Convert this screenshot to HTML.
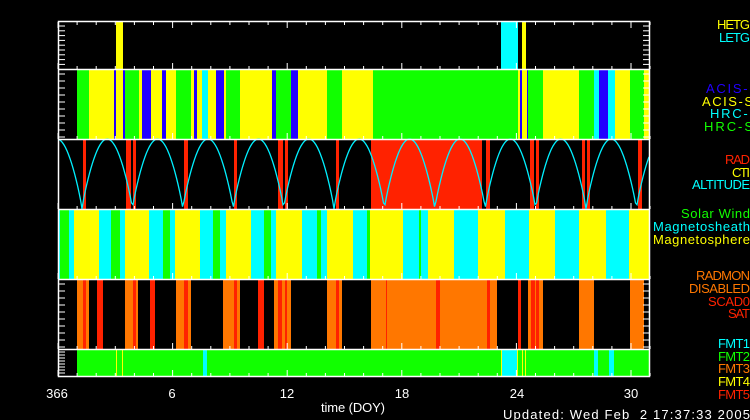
<!DOCTYPE html>
<html><head><meta charset="utf-8"><style>
html,body{margin:0;padding:0;background:#000;width:750px;height:420px;overflow:hidden}
svg{display:block}
text{font-family:"Liberation Sans",sans-serif;font-size:13px}
</style></head><body>
<svg id="s" width="750" height="420" xmlns="http://www.w3.org/2000/svg">
<rect width="750" height="420" fill="#000"/>
<g id="bars"></g>
<path id="alt" fill="none" stroke="#00f0ff" stroke-width="1.3"/>
<g id="ax" stroke="#fff" stroke-width="1.5" fill="none">
<rect x="58.5" y="21.5" width="591" height="355"/>
<line x1="58" y1="69.5" x2="650" y2="69.5"/>
<line x1="58" y1="139.5" x2="650" y2="139.5"/>
<line x1="58" y1="209.5" x2="650" y2="209.5"/>
<line x1="58" y1="279.5" x2="650" y2="279.5"/>
<line x1="58" y1="349.5" x2="650" y2="349.5"/>
</g>
<g id="ticks" stroke="#fff" stroke-width="1"></g>
<g fill="#fff">
<text x="57" y="398" text-anchor="middle">366</text>
<text x="172" y="398" text-anchor="middle">6</text>
<text x="287" y="398" text-anchor="middle">12</text>
<text x="402" y="398" text-anchor="middle">18</text>
<text x="517" y="398" text-anchor="middle">24</text>
<text x="631" y="398" text-anchor="middle">30</text>
<text x="321" y="412" textLength="64" lengthAdjust="spacing">time (DOY)</text>
<text x="503" y="419" xml:space="preserve" textLength="247" lengthAdjust="spacing">Updated: Wed Feb  2 17:37:33 2005</text>
</g>
<g text-anchor="end" lengthAdjust="spacing">
<text x="750" y="29" fill="#ffff00" textLength="33">HETG</text>
<text x="750" y="42" fill="#00ffff" textLength="31">LETG</text>
<text x="753" y="93" fill="#2200ff" textLength="47">ACIS-I</text>
<text x="753" y="106" fill="#ffff00" textLength="51">ACIS-S</text>
<text x="753" y="118" fill="#00ffff" textLength="43">HRC-I</text>
<text x="753" y="131" fill="#11ff00" textLength="49">HRC-S</text>
<text x="750" y="164" fill="#ff2200" textLength="25">RAD</text>
<text x="750" y="177" fill="#ffff00" textLength="18">CTI</text>
<text x="750" y="189" fill="#00ffff" textLength="58">ALTITUDE</text>
<text x="750" y="218" fill="#11ff00" textLength="69">Solar Wind</text>
<text x="750" y="231" fill="#00ffff" textLength="97">Magnetosheath</text>
<text x="750" y="244" fill="#ffff00" textLength="97">Magnetosphere</text>
<text x="750" y="280" fill="#ff7700" textLength="54">RADMON</text>
<text x="750" y="293" fill="#ff7700" textLength="61">DISABLED</text>
<text x="750" y="306" fill="#ff2200" textLength="42">SCAD0</text>
<text x="750" y="318" fill="#ff2200" textLength="22">SAT</text>
<text x="750" y="348" fill="#00ffff" textLength="32">FMT1</text>
<text x="750" y="361" fill="#11ff00" textLength="32">FMT2</text>
<text x="750" y="373" fill="#ff7700" textLength="32">FMT3</text>
<text x="750" y="386" fill="#ffff00" textLength="32">FMT4</text>
<text x="750" y="399" fill="#ff2200" textLength="32">FMT5</text>
</g>
</svg>
<script>
var Y='#ffff00',C='#00ffff',G='#11ff00',B='#2200ff',R='#ff2200',O='#ff7700';
var ns='http://www.w3.org/2000/svg',g=document.getElementById('bars');
function r(x1,x2,y1,y2,c){var e=document.createElementNS(ns,'rect');e.setAttribute('x',x1);e.setAttribute('y',y1);e.setAttribute('width',x2-x1);e.setAttribute('height',y2-y1);e.setAttribute('fill',c);g.appendChild(e);}
function P(y1,y2,a){a.forEach(function(s){r(s[0],s[1],y1,y2,s[2]);});}
P(21,69,[[116,123,Y],[501,518,C],[522,526,Y]]);
P(69,139,[[77,89,G],[89,114,Y],[114,116,B],[116,123,Y],[123,125,B],[125,139,G],[139,142,Y],[142,151,B],[151,162,Y],[162,166,B],[166,176,Y],[176,191,G],[191,194,Y],[194,197,B],[197,202,Y],[202,208,C],[208,216,Y],[216,224,B],[224,226,Y],[226,240,G],[240,272,Y],[272,276,B],[276,291,G],[291,298,B],[298,327,Y],[327,342,G],[342,373,Y],[373,518,G],[518,520,Y],[520,522,B],[522,527,Y],[527,528,B],[528,543,G],[543,579,Y],[579,594,G],[594,599,C],[599,608,B],[608,615,C],[615,630,Y],[630,644,G],[644,650,Y]]);
P(139,209,[[83,86,R],[126,131,R],[133,136,R],[184,188,R],[234,237,R],[278,283,R],[285,288,R],[336,339,R],[371,482,R],[486,490,R],[530,534,R],[536,539,R],[582,585,R],[587,590,R],[638,642,R]]);
P(209,279,[[58,60,C],[60,69,G],[69,74,C],[74,99,Y],[99,111,C],[111,120,G],[120,125,C],[125,149,Y],[149,163,C],[163,170,G],[170,175,C],[175,200,Y],[200,213,C],[213,220,G],[220,226,C],[226,251,Y],[251,264,C],[264,271,G],[271,276,C],[276,302,Y],[302,317,C],[317,321,G],[321,327,C],[327,353,Y],[353,367,C],[367,370,G],[370,403,Y],[403,428,C],[419,421,G],[428,454,Y],[454,478,C],[478,505,Y],[505,529,C],[529,555,Y],[555,579,C],[579,606,Y],[606,629,C],[629,650,Y]]);
P(279,349,[[77,89,O],[83,86,R],[97,103,R],[125,138,O],[133,136,R],[150,155,R],[176,191,O],[184,188,R],[223,240,O],[234,237,R],[258,264,R],[274,291,O],[278,282,R],[285,287,R],[327,342,O],[336,339,R],[371,497,O],[386,387,R],[436,440,R],[487,490,R],[518,521,R],[528,543,O],[531,535,R],[536,539,R],[579,594,O],[630,644,O]]);
P(349,377,[[77,650,G],[116,117,Y],[122,123,Y],[203,207,C],[501,502,Y],[502,517,C],[517,518,Y],[522,523,Y],[525,526,Y],[594,598,C],[609,614,C]]);
var d='';for(var x=58;x<=650;x+=1.5){var v=Math.abs(Math.sin(Math.PI*(x-82)/50.4));var y=209-70*Math.pow(v,0.85);d+=(x==58?'M':'L')+x+' '+Math.max(139,y).toFixed(1);}
document.getElementById('alt').setAttribute('d',d);
var t=document.getElementById('ticks'),h='';
function L(a,b,c,e){h+='<line x1="'+a+'" y1="'+b+'" x2="'+c+'" y2="'+e+'"/>';}
[[21,69],[69,139],[279,349]].forEach(function(p){for(var y=p[0]+5;y<p[1];y+=(p[1]-p[0])/10){L(58,y,65,y);L(643,y,650,y);}});
for(var y=352;y<376;y+=3)L(58,y,65,y);
for(var dd=0;dd<=31;dd++){var x=58+dd*19.1;var l=(dd%6==0)?6:3;[69,139,209,279,349].forEach(function(yy){L(x,yy,x,yy-l);});L(x,376,x,376-l);L(x,22,x,22+l);}
t.innerHTML=h;
</script>
</body></html>
